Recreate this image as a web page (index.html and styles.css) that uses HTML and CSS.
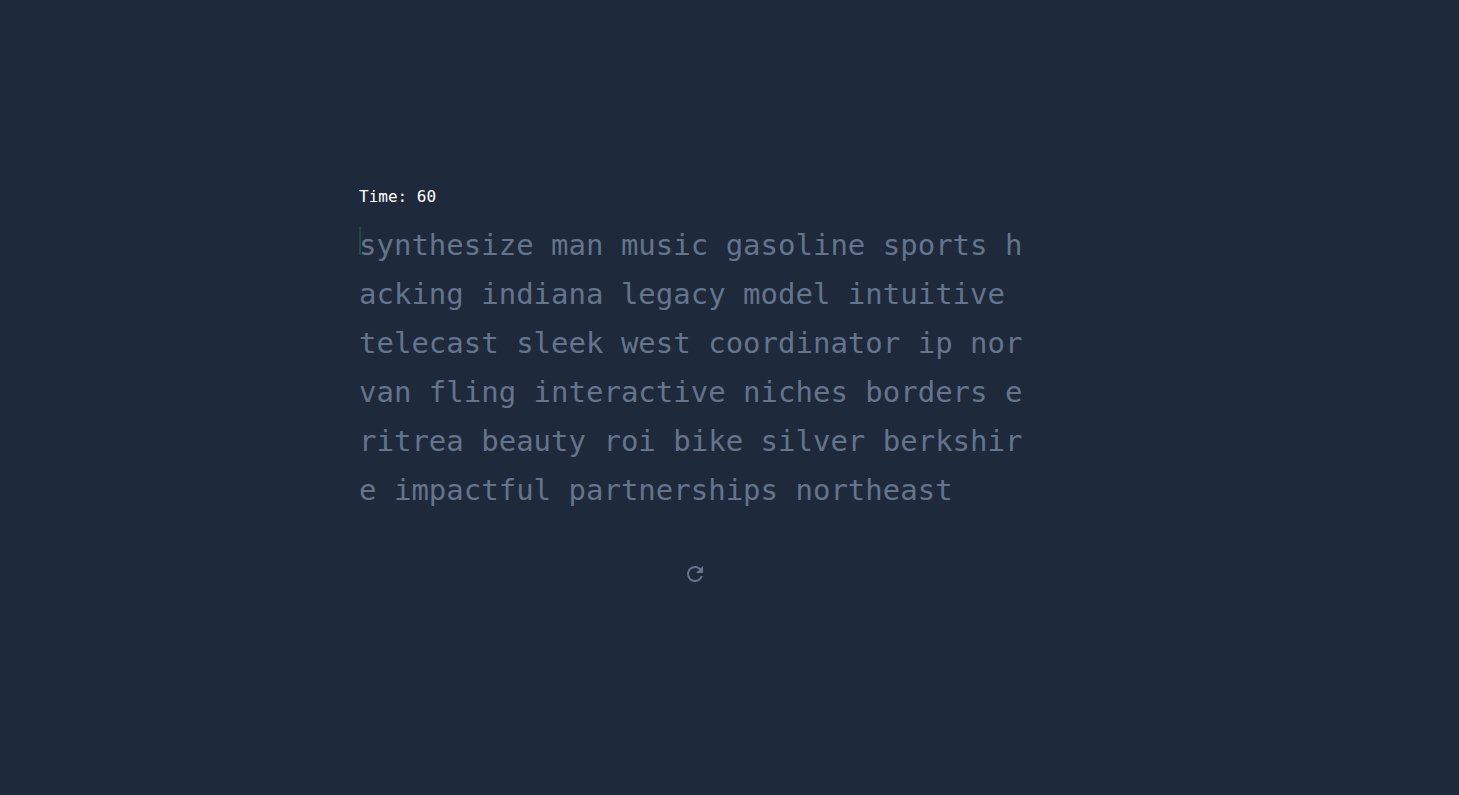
FILE: index.html
```html
<!DOCTYPE html>
<html lang="en">
<head>
<meta charset="utf-8">
<meta name="viewport" content="width=device-width, initial-scale=1">
<title>Typing test</title>
<link rel="stylesheet" href="styles.css">
</head>
<body>
<main class="page">
  <section class="test">
    <div class="timer">Time: 60</div>
    <p class="words"><span class="caret"></span>synthesize man music gasoline sports hacking indiana legacy model intuitive telecast sleek west coordinator ip norvan fling interactive niches borders eritrea beauty roi bike silver berkshire impactful partnerships northeast</p>
    <button class="restart" type="button" aria-label="Restart">
      <svg class="restart-icon" viewBox="0 0 24 24" aria-hidden="true"><path d="M17.65 6.35A7.96 7.96 0 0 0 12 4a8 8 0 1 0 7.73 10h-2.08A6 6 0 1 1 12 6c1.66 0 3.14.69 4.22 1.78L13 11h7V4z"/></svg>
    </button>
  </section>
</main>
</body>
</html>
```

FILE: styles.css
```css
* {
  box-sizing: border-box;
}

body {
  margin: 0;
  background: #1e293b;
  color: #ffffff;
  font-family: "DejaVu Sans Mono", monospace;
}

.page {
  max-width: 741px;
  min-height: 100vh;
  margin: 0 auto;
  padding-top: 185px;
}

.test {
  display: flex;
  flex-direction: column;
  max-width: 672px;
}

.timer {
  font-size: 16px;
  line-height: 24px;
}

.words {
  position: relative;
  margin: 12px 0 0;
  color: #64748b;
  font-size: 29px;
  line-height: 49px;
  word-break: break-all;
}

.caret {
  position: absolute;
  top: 6px;
  left: 0;
  width: 2px;
  height: 28px;
  background: #1f4847;
}

.restart {
  align-self: center;
  margin-top: 39px;
  padding: 8px;
  border: 0;
  background: none;
  color: #64748b;
  cursor: pointer;
}

.restart-icon {
  display: block;
  width: 24px;
  height: 24px;
  fill: currentColor;
}
```
